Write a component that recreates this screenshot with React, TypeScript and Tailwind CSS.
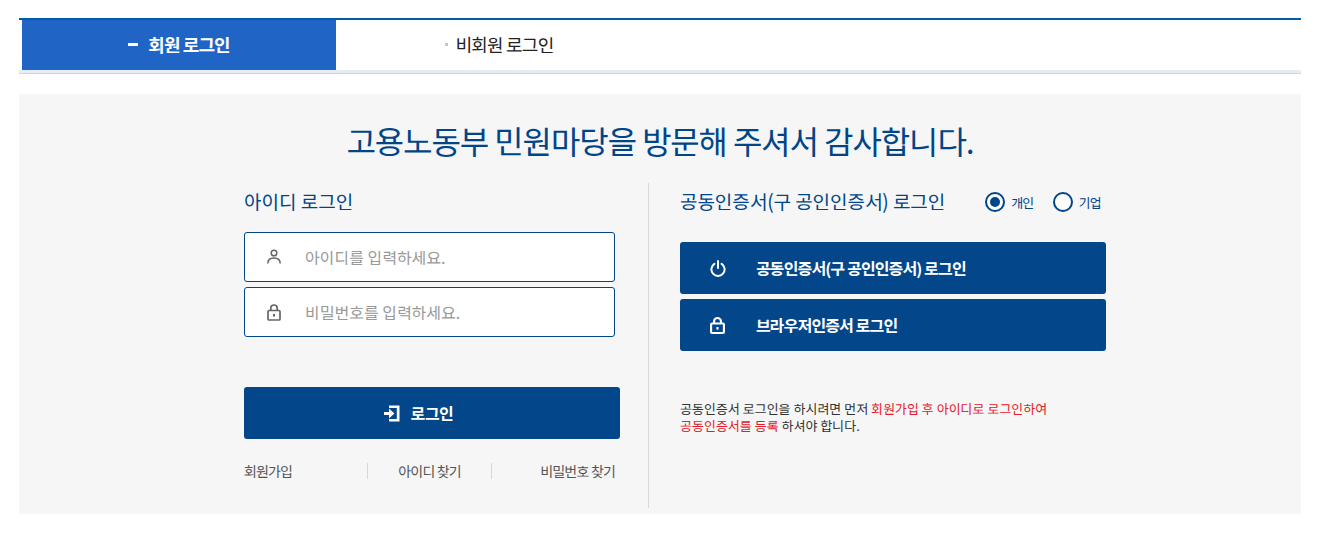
const font = "font-['Noto_Sans_KR','Noto_Sans_CJK_KR',sans-serif]";

function UserIcon() {
  return (
    <svg width="16" height="16" viewBox="0 0 16 16" fill="none" stroke="#666" strokeWidth="1.5">
      <circle cx="8" cy="4" r="2.8" />
      <path d="M1.8 14.5c0-3.6 2.6-5.6 6.2-5.6s6.2 2 6.2 5.6" />
    </svg>
  );
}

function LockIcon({ color, w = 2, width = 14 }: { color: string; w?: number; width?: number }) {
  return (
    <svg width={width} height="17" viewBox="0 0 14 17" preserveAspectRatio="none" fill="none" stroke={color} strokeWidth={w}>
      <rect x="1" y="6.5" width="12" height="9.5" rx="1" />
      <path d="M3.8 6.5V4.2a3.2 3.2 0 0 1 6.4 0v2.3" />
      <rect x="6" y="10" width="2" height="2.6" fill={color} stroke="none" />
    </svg>
  );
}

function PowerIcon() {
  return (
    <svg width="16" height="17" viewBox="0 0 16 17" fill="none" stroke="#fff" strokeWidth="2" strokeLinecap="round">
      <path d="M8 1v7" />
      <path d="M4.4 3.8a6.6 6.6 0 1 0 7.2 0" />
    </svg>
  );
}

function EnterIcon() {
  return (
    <svg width="16" height="17" viewBox="0 0 16 17" fill="none">
      <path d="M5 0.5h10.5v16H5v-2.6h7.8V3.1H5z" fill="#fff" />
      <path d="M0 7h5V3.6l5.4 4.9L5 13.4V10H0z" fill="#fff" />
    </svg>
  );
}

function Field({ icon, placeholder, className }: { icon: React.ReactNode; placeholder: string; className: string }) {
  return (
    <div className={`flex h-[50px] w-[371px] items-center rounded-[3px] border border-[#004588] bg-white ${className}`}>
      <span className="flex w-[60px] justify-center pr-[2px]">{icon}</span>
      <span className="text-[16px] leading-none text-[#999]">{placeholder}</span>
    </div>
  );
}

function Radio({ label, checked, className }: { label: string; checked?: boolean; className?: string }) {
  return (
    <div className={`mt-[2px] flex items-center gap-[6px] ${className ?? ""}`}>
      <span className="flex h-[20px] w-[20px] items-center justify-center rounded-full border-2 border-[#004588] bg-white">
        {checked && <span className="h-[10px] w-[10px] rounded-full bg-[#004588]" />}
      </span>
      <span className="text-[13px] leading-none tracking-[-0.8px] text-[#004588]">{label}</span>
    </div>
  );
}

function CertButton({ icon, label, className }: { icon: React.ReactNode; label: string; className?: string }) {
  return (
    <div className={`flex h-[52px] w-[426px] items-center rounded-[3px] bg-[#03478a] ${className ?? ""}`}>
      <span className="flex w-[76px] justify-center pr-[1px]">{icon}</span>
      <span className="text-[16px] font-bold leading-none tracking-[-0.87px] text-white">{label}</span>
    </div>
  );
}

export default function App() {
  return (
    <div className={`${font} h-[535px] w-[1325px] overflow-hidden bg-white pl-[19px] pr-[24px] pt-[18px]`}>
      <div className="border-t-2 border-[#005ea8]">
        <div className="flex h-[50px] pl-[3px]">
          <div className="flex w-[314px] items-center justify-center gap-[10px] bg-[#2065c6] pb-[2px] text-white">
            <span className="h-[3px] w-[10px] bg-white" />
            <span className="text-[18px] font-bold leading-none tracking-[-0.9px]">회원 로그인</span>
          </div>
          <div className="flex w-[314px] items-center justify-center gap-[8px] pb-[2px] pl-[12px] text-[#222]">
            <span className="h-[3px] w-[3px] bg-[#c4c4c4]" />
            <span className="text-[18px] leading-none tracking-[-0.8px]">비회원 로그인</span>
          </div>
        </div>
        <div className="h-[4px] border-b border-[#cbd8e4] bg-[#e5ecf3]" />
      </div>

      <div className="mt-[20px] h-[420px] bg-[#f6f6f6] pt-[24px]">
        <h1 className="text-center text-[32px] font-normal leading-[44px] tracking-[-1.1px] text-[#004588]">
          고용노동부 민원마당을 방문해 주셔서 감사합니다.
        </h1>
        <div className="mt-[21px] flex pl-[225px]">
          <div className="w-[376px] pt-[4px]">
            <h2 className="text-[19px] font-normal leading-[28px] text-[#004588]">아이디 로그인</h2>
            <Field className="mt-[17px]" icon={<UserIcon />} placeholder="아이디를 입력하세요." />
            <Field className="mt-[5px]" icon={<LockIcon color="#666" w={1.7} />} placeholder="비밀번호를 입력하세요." />
            <div className="mt-[50px] flex h-[52px] items-center justify-center gap-[11px] rounded-[3px] bg-[#03478a] pr-[27px]">
              <EnterIcon />
              <span className="text-[16px] font-bold leading-none tracking-[-0.6px] text-white">로그인</span>
            </div>
            <div className="mt-[24px] flex w-[371px] items-center text-[14px] leading-none tracking-[-0.85px] text-[#555]">
              <span className="w-[123px]">회원가입</span>
              <span className="h-[16px] w-[1px] bg-[#d8d8d8]" />
              <span className="w-[123px] text-center">아이디 찾기</span>
              <span className="h-[16px] w-[1px] bg-[#d8d8d8]" />
              <span className="flex-1 text-right">비밀번호 찾기</span>
            </div>
          </div>
          <div className="ml-[28px] h-[325px] w-[1px] bg-[#d9d9d9]" />
          <div className="ml-[31px] w-[426px] pt-[4px]">
            <div className="flex h-[28px] items-center">
              <h2 className="text-[19px] font-normal leading-[28px] tracking-[-0.05px] text-[#004588]">공동인증서(구 공인인증서) 로그인</h2>
              <Radio className="ml-[40px]" label="개인" checked />
              <Radio className="ml-[19px]" label="기업" />
            </div>
            <CertButton className="mt-[27px]" icon={<PowerIcon />} label="공동인증서(구 공인인증서) 로그인" />
            <CertButton className="mt-[5px]" icon={<LockIcon color="#fff" width={15} />} label="브라우저인증서 로그인" />
            <p className="mt-[49px] text-[13px] leading-[17px] text-[#333]">
              공동인증서 로그인을 하시려면 먼저 <span className="text-[#e2202c]">회원가입 후 아이디로 로그인하여</span>
              <br />
              <span className="text-[#e2202c]">공동인증서를 등록</span> 하셔야 합니다.
            </p>
          </div>
        </div>
      </div>
    </div>
  );
}
